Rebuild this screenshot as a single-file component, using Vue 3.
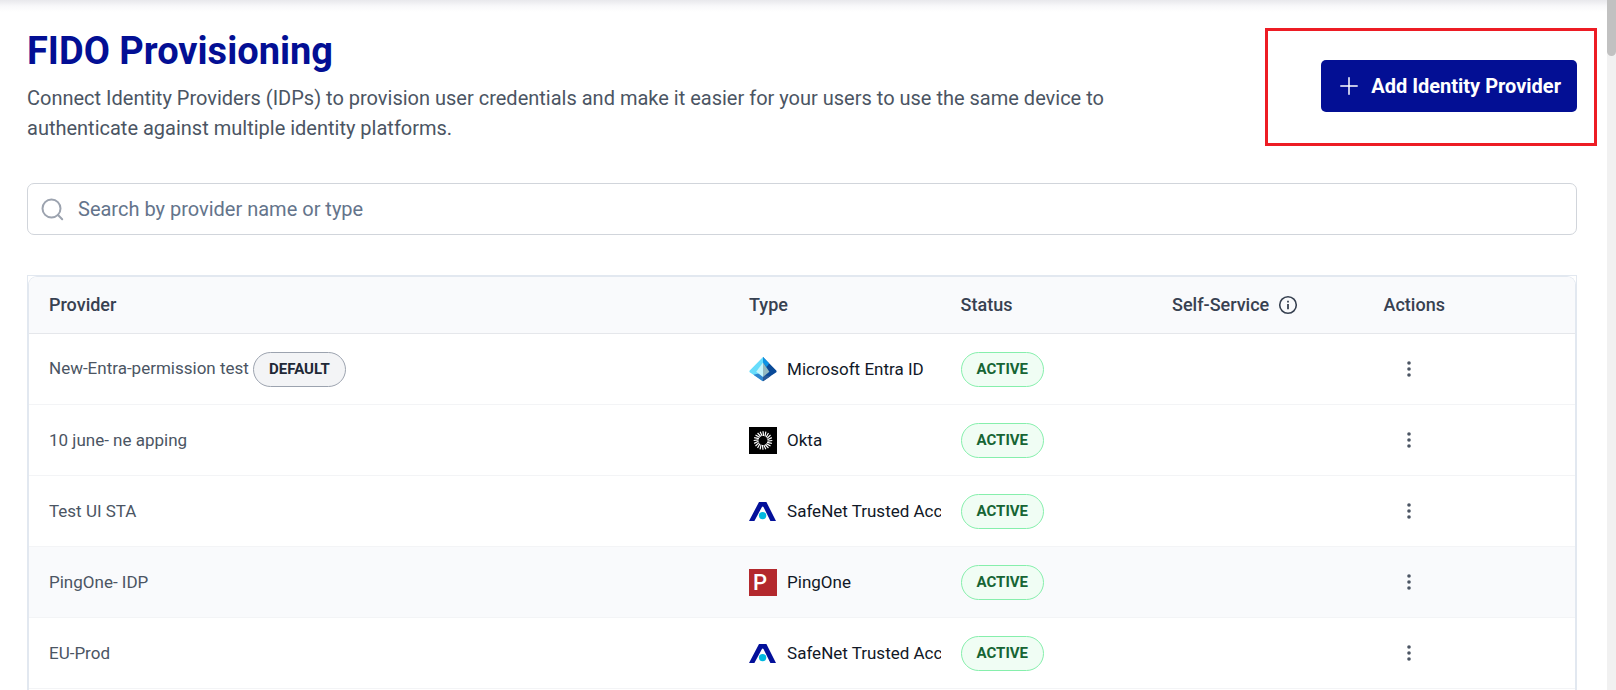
<template>
  <div class="app-shell">
    <main class="page">
      <header class="page-header">
        <div class="page-intro">
          <h1>FIDO Provisioning</h1>
          <p>
            Connect Identity Providers (IDPs) to provision user credentials and make it easier for your users to use
            the same device to authenticate against multiple identity platforms.
          </p>
        </div>
        <div class="add-provider">
          <button type="button" class="add-button" @click="handleAdd">
            <svg width="20" height="20" viewBox="0 0 20 20" fill="none" stroke="currentColor" stroke-width="1.5" stroke-linecap="round">
              <path d="M10 1.8v16.4M1.8 10h16.4" />
            </svg>
            <span>Add Identity Provider</span>
          </button>
        </div>
      </header>

      <div class="search-box">
        <svg class="search-icon" width="24" height="24" viewBox="0 0 24 24" fill="none" stroke="currentColor" stroke-width="2" stroke-linecap="round">
          <circle cx="10.5" cy="10.5" r="9" />
          <path d="M17 17l4.2 4.2" />
        </svg>
        <input v-model="search" type="text" aria-label="Search providers" placeholder="Search by provider name or type" />
      </div>

      <div class="table-wrapper">
        <div class="table-card">
          <table>
            <thead>
              <tr>
                <th scope="col">Provider</th>
                <th scope="col" class="col-small">Type</th>
                <th scope="col" class="col-small">Status</th>
                <th scope="col" class="col-small">
                  <div class="th-info">
                    <span>Self-Service</span>
                    <svg width="20" height="20" viewBox="0 0 20 20" fill="none" stroke="currentColor">
                      <circle cx="10" cy="10" r="8.3" stroke-width="1.6" />
                      <path d="M10 9v5.2" stroke-width="1.8" />
                      <path d="M10 5.8v1.8" stroke-width="1.8" />
                    </svg>
                  </div>
                </th>
                <th scope="col" class="col-small">Actions</th>
              </tr>
            </thead>
            <tbody>
              <tr v-for="provider in filteredProviders" :key="provider.id" :class="{ active: provider.id === activeId }">
                <td class="provider-name">
                  {{ provider.name }}
                  <span v-if="provider.isDefault" class="badge badge-default">DEFAULT</span>
                </td>
                <td>
                  <div class="provider-type">
                    <svg v-if="provider.icon === 'entra'" width="28" height="28" viewBox="0 0 28 28">
                      <path d="M14 2L1 15.2q-1.4 1.4.4 2.6L14 26z" fill="#66dcfb" />
                      <path d="M14 2l13 13.2q1.4 1.4-.4 2.6L14 26z" fill="#0a4a98" />
                      <path d="M14 2l6.2 6.4L17.6 12 14 8z" fill="#0c93e4" />
                      <path d="M4.4 19.8L14 17.6v8.6q-.7 0-1.4-.6z" fill="#2f86cf" />
                      <path d="M14 20l7.6 1.2-6.2 4.2q-.7.8-1.4.8z" fill="#2a5b97" />
                      <path d="M14 7.6l-6.8 9.2L14 22z" fill="#c4f4fb" />
                      <path d="M14 7.6l6.4 9.2L14 22z" fill="#92b9c1" />
                    </svg>
                    <svg v-else-if="provider.icon === 'okta'" width="28" height="27" viewBox="0 0 28 27">
                      <path d="M0 0h28v27H0z" fill="#000" />
                      <g stroke="#fff" stroke-width="1.2">
                        <path
                          v-for="n in 20"
                          :key="n"
                          d="M14 4.2l.6 4.8"
                          :transform="`rotate(${n * 18} 14 13.5)`"
                        />
                      </g>
                    </svg>
                    <svg v-else-if="provider.icon === 'ping'" width="28" height="27" viewBox="0 0 28 27">
                      <path d="M0 0h28v27H0z" fill="#b3282d" />
                      <text x="4" y="21" class="ping-letter">P</text>
                    </svg>
                    <svg v-else width="28" height="27" viewBox="0 0 28 27">
                      <path d="M0 23L10 4h7.4L27 23h-5.6L14.6 9.2q-.9-1.6-1.8 0L5.4 23z" fill="#03109a" />
                      <circle cx="13.6" cy="17.6" r="3.7" fill="#00b9e0" />
                    </svg>
                    <span>{{ provider.type }}</span>
                  </div>
                </td>
                <td><span class="badge badge-active">{{ provider.status }}</span></td>
                <td></td>
                <td>
                  <button type="button" class="menu-button" :aria-label="`Actions for ${provider.name}`" @click="activeId = provider.id">
                    <svg width="18" height="18" viewBox="0 0 18 18" fill="currentColor">
                      <circle cx="9" cy="3" r="1.8" />
                      <circle cx="9" cy="9" r="1.8" />
                      <circle cx="9" cy="15" r="1.8" />
                    </svg>
                  </button>
                </td>
              </tr>
            </tbody>
          </table>
        </div>
      </div>
    </main>
    <div class="scroll-rail">
      <div class="scroll-thumb"></div>
    </div>
  </div>
</template>

<script setup>
import { computed, ref } from 'vue';

const search = ref('');
const activeId = ref(4);

const providers = ref([
  { id: 1, name: 'New-Entra-permission test', type: 'Microsoft Entra ID', icon: 'entra', status: 'ACTIVE', isDefault: true },
  { id: 2, name: '10 june- ne apping', type: 'Okta', icon: 'okta', status: 'ACTIVE' },
  { id: 3, name: 'Test UI STA', type: 'SafeNet Trusted Access', icon: 'safenet', status: 'ACTIVE' },
  { id: 4, name: 'PingOne- IDP', type: 'PingOne', icon: 'ping', status: 'ACTIVE' },
  { id: 5, name: 'EU-Prod', type: 'SafeNet Trusted Access', icon: 'safenet', status: 'ACTIVE' }
]);

const filteredProviders = computed(() => {
  const term = search.value.trim().toLowerCase();
  return providers.value.filter((p) => `${p.name} ${p.type}`.toLowerCase().includes(term));
});

const handleAdd = () => {
  search.value = '';
};
</script>

<style>
body { margin: 0; background-color: #fff; }
</style>

<style scoped>
.app-shell { display: flex; height: 100vh; overflow: hidden; font-family: Roboto, "Liberation Sans", sans-serif; color: #111827; }
.app-shell * { box-sizing: border-box; }
.page { flex: 1; min-width: 0; display: flex; flex-direction: column; padding: 28px 30px 0 27px; background: linear-gradient(#e8e8ec, #f8f8fa 6px, #fff 12px); }

/* Header */
.page-header { display: flex; justify-content: space-between; align-items: flex-start; }
.page-intro { max-width: 1100px; }
.page-intro h1 { margin: 0; font-size: 38px; line-height: 46px; font-weight: 700; color: #030f94; }
.page-intro p { margin: 9px 0 0; font-size: 20px; line-height: 30px; color: #4b5563; }
.add-provider { position: relative; flex-shrink: 0; margin-top: 32px; }
.add-provider::after { content: ""; position: absolute; inset: -32px -20px -34px -56px; border: 3px solid #ed1c24; pointer-events: none; }
.add-button { display: flex; align-items: center; gap: 12px; height: 52px; padding: 0 16px 0 18px; border: none; border-radius: 5px; background-color: #030f94; color: #fff; font-family: inherit; font-size: 20px; font-weight: 700; cursor: pointer; }

/* Search */
.search-box { position: relative; flex-shrink: 0; margin-top: 40px; }
.search-box input { display: block; width: 100%; height: 52px; padding: 0 16px 0 50px; border: 1px solid #d1d5db; border-radius: 7px; background-color: #fff; color: #111827; font-family: inherit; font-size: 20px; }
.search-box input::placeholder { color: #64748b; opacity: 1; }
.search-icon { position: absolute; left: 14px; top: 15px; color: #9ca3af; }

/* Table */
.table-wrapper { flex: 1; display: flex; margin-top: 40px; border: 1px solid #e2e8f0; border-bottom: none; }
.table-card { flex: 1; border: 1px solid #e2e8f0; border-bottom: none; border-radius: 9px 9px 0 0; overflow: hidden; }
table { width: 100%; table-layout: fixed; border-collapse: separate; border-spacing: 0; font-size: 17px; line-height: 28px; }
th { height: 57px; padding: 0 0 0 20px; text-align: left; font-size: 18px; font-weight: 500; color: #374151; background-color: #f9fafc; border-bottom: 1px solid #e5e7eb; }
td { height: 71px; padding: 0 0 0 20px; border-bottom: 1px solid #f3f4f6; overflow: hidden; }
tr.active td { background-color: #f9fafc; }
.col-small { width: 13.68%; }
.th-info { display: flex; align-items: center; gap: 9px; }
.provider-name { color: #4b5563; }
.provider-type { display: flex; align-items: center; gap: 10px; white-space: nowrap; }
.provider-type svg { flex-shrink: 0; }
.ping-letter { font-family: Roboto, sans-serif; font-size: 22px; font-weight: 500; fill: #fff; }
.badge { display: inline-block; height: 35px; padding: 0 15px; border: 1px solid; border-radius: 18px; font-size: 15px; line-height: 32px; font-weight: 700; vertical-align: middle; }
.badge-default { background-color: #f3f4f6; border-color: #9ca3af; color: #1f2937; }
.badge-active { background-color: #f0fdf4; border-color: #86efac; color: #166534; }
.menu-button { display: flex; align-items: center; justify-content: center; width: 50px; height: 36px; padding: 0; border: none; background: none; color: #4b5563; cursor: pointer; }

/* Scroll rail */
.scroll-rail { flex-shrink: 0; width: 9px; background-color: #f1f1f1; }
.scroll-thumb { height: 56px; border-radius: 0 0 5px 5px; background-color: #c1c1c1; }
</style>
